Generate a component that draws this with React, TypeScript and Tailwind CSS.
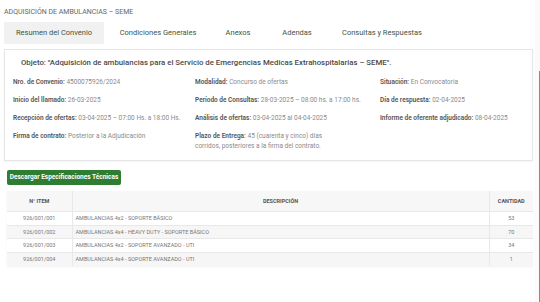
import React from "react";

const font = { fontFamily: "Roboto, 'Liberation Sans', sans-serif" };

const tabs = [
  { label: "Resumen del Convenio", w: "w-[100px]", active: true },
  { label: "Condiciones Generales", w: "w-[108px]" },
  { label: "Anexos", w: "w-[52px]" },
  { label: "Adendas", w: "w-[66px]" },
  { label: "Consultas y Respuestas", w: "w-[104px]" },
];

const items = [
  { nro: "926/001/001", desc: "AMBULANCIAS 4x2 - SOPORTE BÁSICO", cant: "53" },
  { nro: "926/001/002", desc: "AMBULANCIAS 4x4 - HEAVY DUTY - SOPORTE BÁSICO", cant: "70" },
  { nro: "926/001/003", desc: "AMBULANCIAS 4x2 - SOPORTE AVANZADO - UTI", cant: "34" },
  { nro: "926/001/004", desc: "AMBULANCIAS 4x4 - SOPORTE AVANZADO - UTI", cant: "1" },
];

const Field = ({ label, value }: { label: string; value: string }) => (
  <p className="leading-[10px]">
    <strong className="font-semibold text-[#555]">{label}:</strong>{" "}
    <span className="text-[#8a8a8a]">{value}</span>
  </p>
);

export default function App() {
  return (
    <div className="flex w-[540px] h-[302px] bg-white overflow-hidden" style={font}>
      <div className="w-[535px] shrink-0">
        <h1 className="pl-[4px] pt-[8px] text-[7px] leading-[9px] text-[#666]">
          ADQUISICIÓN DE AMBULANCIAS – SEME
        </h1>

        <div className="flex pl-[4px] mt-[5px] h-[22px]">
          {tabs.map((t) => (
            <div
              key={t.label}
              className={`${t.w} flex items-center justify-center text-[7.5px] text-[#3f5443] ${
                t.active ? "bg-[#f1f1f1]" : ""
              }`}
            >
              {t.label}
            </div>
          ))}
        </div>

        <div className="ml-[4px] mt-[5px] w-[529px] h-[112px] border border-[#e6e6e6] shadow-[0_1px_2px_rgba(0,0,0,0.05)]">
          <p className="pl-[16px] pt-[8px] text-[7.8px] leading-[10px] font-medium text-[#4a4a4a]">
            Objeto: "Adquisición de ambulancias para el Servicio de Emergencias Medicas Extrahospitalarias – SEME".
          </p>
          <div className="grid grid-cols-[182px_185px_1fr] gap-y-[8px] pl-[8px] pt-[9px] text-[6.5px]">
            <Field label="Nro. de Convenio" value="4500075926/2024" />
            <Field label="Modalidad" value="Concurso de ofertas" />
            <Field label="Situación" value="En Convocatoria" />
            <Field label="Inicio del llamado" value="26-03-2025" />
            <Field label="Período de Consultas" value="28-03-2025 – 08:00 hs. a 17:00 hs." />
            <Field label="Día de respuesta" value="02-04-2025" />
            <Field label="Recepción de ofertas" value="03-04-2025 – 07:00 Hs. a 18:00 Hs." />
            <Field label="Análisis de ofertas" value="03-04-2025 al 04-04-2025" />
            <Field label="Informe de oferente adjudicado" value="08-04-2025" />
            <Field label="Firma de contrato" value="Posterior a la Adjudicación" />
            <p className="leading-[10px] w-[140px]">
              <strong className="font-semibold text-[#555]">Plazo de Entrega:</strong>{" "}
              <span className="text-[#8a8a8a]">45 (cuarenta y cinco) días corridos, posteriores a la firma del contrato.</span>
            </p>
          </div>
        </div>

        <button className="ml-[7px] mt-[9px] h-[15px] w-[114px] rounded-[2px] bg-[#2e7d32] text-white text-[6.5px] font-bold">
          Descargar Especificaciones Técnicas
        </button>

        <table className="ml-[7px] mt-[5px] w-[526px] border-collapse text-[5.5px] text-[#777] shadow-[0_1px_2px_rgba(0,0,0,0.06)]">
          <thead>
            <tr className="h-[21px] bg-[#f7f7f7] text-[#555] font-bold">
              <th className="w-[65px] border-r border-[#e8e8e8]">N° ITEM</th>
              <th className="border-r border-[#e8e8e8]">DESCRIPCIÓN</th>
              <th className="w-[44px]">CANTIDAD</th>
            </tr>
          </thead>
          <tbody>
            {items.map((it, i) => (
              <tr key={it.nro} className={`h-[13.5px] border-t border-[#e8e8e8] ${i % 2 === 1 ? "bg-[#f6f6f6]" : "bg-white"}`}>
                <td className="text-center border-r border-[#e8e8e8]">{it.nro}</td>
                <td className="pl-[3px] border-r border-[#e8e8e8]">{it.desc}</td>
                <td className="text-center">{it.cant}</td>
              </tr>
            ))}
          </tbody>
        </table>
      </div>
      <div className="w-[5px] bg-[#fafafa] flex justify-end">
        <div className="w-[2px] mt-[71px] h-[231px] border-r border-[#8a8a8a]" />
      </div>
    </div>
  );
}
